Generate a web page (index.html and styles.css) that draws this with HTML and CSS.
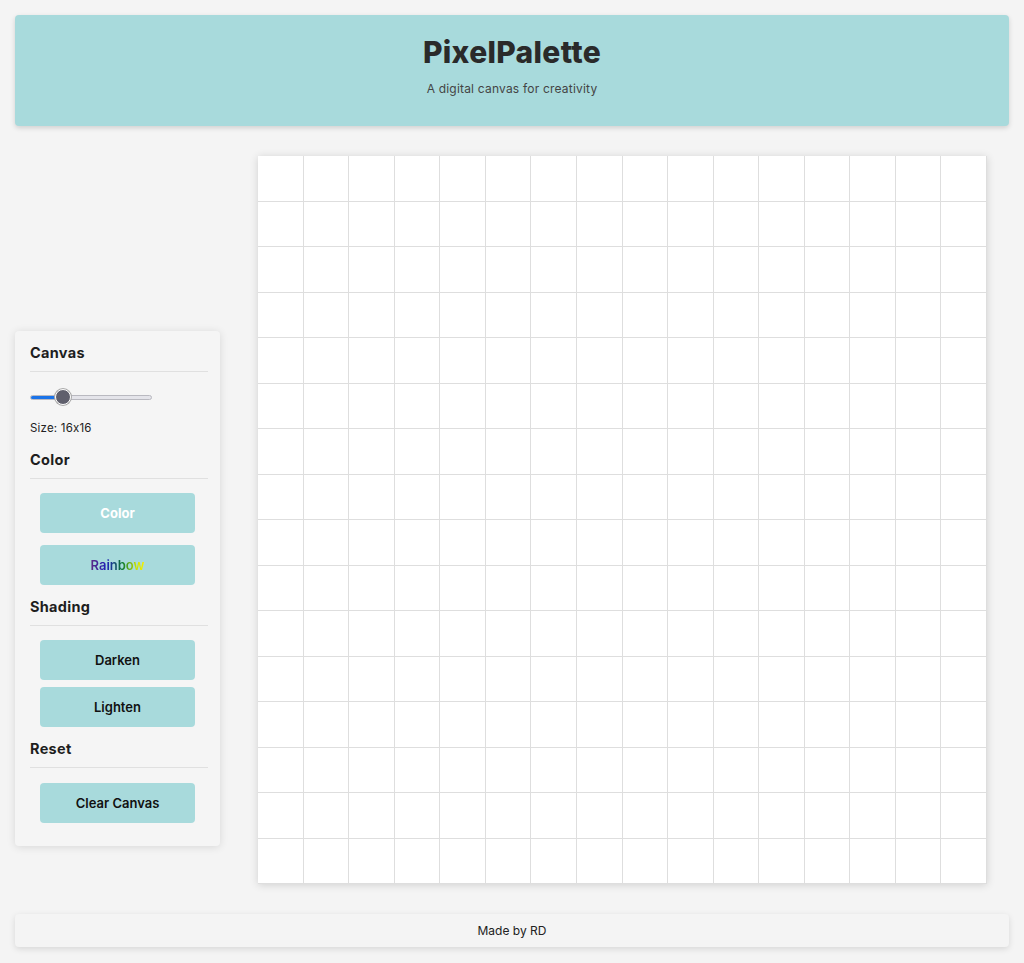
FILE: index.html
```html
<!DOCTYPE html>
<html lang="en">
<head>
<meta charset="UTF-8">
<title>PixelPalette</title>
<link rel="stylesheet" href="styles.css">
</head>
<body>
<div class="page">
  <header class="header">
    <h1 class="title">PixelPalette</h1>
    <p class="subtitle">A digital canvas for creativity</p>
  </header>
  <main class="main">
    <aside class="sidebar">
      <h2 class="section-title">Canvas</h2>
      <div class="rule"></div>
      <div class="slider">
        <div class="track"><div class="fill" style="width:27%"></div></div>
        <div class="thumb" style="left:27%"></div>
      </div>
      <p class="size">Size: 16x16</p>
      <h2 class="section-title">Color</h2>
      <div class="rule"></div>
      <button class="btn btn-color">Color</button>
      <button class="btn"><span class="rainbow">Rainbow</span></button>
      <h2 class="section-title">Shading</h2>
      <div class="rule"></div>
      <button class="btn">Darken</button>
      <button class="btn">Lighten</button>
      <h2 class="section-title">Reset</h2>
      <div class="rule"></div>
      <button class="btn btn-clear">Clear Canvas</button>
    </aside>
    <section class="canvas" id="canvas"></section>
  </main>
  <footer class="footer">Made by RD</footer>
</div>
<script>
  var c = document.getElementById('canvas');
  for (var i = 0; i < 256; i++) {
    var d = document.createElement('div');
    d.className = 'cell';
    c.appendChild(d);
  }
</script>
</body>
</html>
```

FILE: styles.css
```css
* { box-sizing: border-box; }
html, body { margin: 0; padding: 0; }
body {
  background: #f4f4f4;
  font-family: Inter, "Noto Sans", sans-serif;
  font-feature-settings: "calt" 0;
  color: #222;
}
.page {
  padding: 15px;
}
.header {
  background: #a8dadc;
  border-radius: 4px;
  height: 111px;
  box-shadow: 0 2px 5px rgba(0,0,0,0.15);
  text-align: center;
  padding-top: 19px;
}
.title {
  margin: 0;
  font-size: 30px;
  font-weight: 800;
  color: #2a2a2a;
  letter-spacing: 0.3px;
  line-height: 36px;
}
.subtitle {
  margin: 11px 0 0;
  font-size: 12px;
  color: #444;
  line-height: 16px;
  letter-spacing: 0.2px;
}
.main {
  display: flex;
  align-items: flex-start;
  margin-top: 30px;
}
.sidebar {
  width: 205px;
  margin-top: 175px;
  background: #f5f5f5;
  border-radius: 4px;
  box-shadow: 0 1px 8px rgba(0,0,0,0.12);
  padding: 13px 12px 23px 15px;
  display: flex;
  flex-direction: column;
  align-items: stretch;
}
.section-title {
  margin: 0;
  font-size: 14.5px;
  font-weight: 700;
  color: #1e1e1e;
  line-height: 18px;
  letter-spacing: 0.3px;
}
.rule {
  height: 1px;
  background: #e0e0e0;
  margin: 9px 0 14px;
}
.slider {
  position: relative;
  width: 122px;
  height: 16px;
  margin: 3px 0 0;
}
.track {
  position: absolute;
  left: 0; right: 0;
  top: 6px;
  height: 5px;
  border-radius: 3px;
  background: #e4e4ea;
  border: 1px solid #b9b9c0;
  overflow: hidden;
}
.fill {
  height: 100%;
  background: #1a73e8;
}
.thumb {
  position: absolute;
  top: 0;
  width: 16px;
  height: 16px;
  margin-left: -8px;
  border-radius: 50%;
  background: #5f5f6c;
  border: 1.5px solid #fff;
  box-shadow: 0 0 0 1px #aaa;
}
.size {
  margin: 16px 0 16px;
  font-size: 11.5px;
  line-height: 14px;
  color: #222;
  letter-spacing: 0.2px;
}
.btn {
  display: block;
  width: 155px;
  height: 40px;
  margin: 0 0 12px 10px;
  border: none;
  border-radius: 4px;
  background: #a8dadc;
  font-family: Inter, "Liberation Sans", sans-serif;
  font-size: 13px;
  font-weight: 600;
  color: #111;
  padding: 0;
}
.btn-color { color: #fff; font-weight: 700; }
.rainbow {
  background: linear-gradient(to right, #5b2a86, #1f1fb8 30%, #0a7a2a 60%, #c8e000 85%, #f5f000);
  -webkit-background-clip: text;
  background-clip: text;
  color: transparent;
}
.sidebar .btn:nth-of-type(2), .sidebar .btn:nth-of-type(4) { margin-bottom: 13px; }
.btn:nth-of-type(3) { margin-bottom: 7px; }
.btn-clear { margin-top: 1px; margin-bottom: 0; }
.canvas {
  width: 729px;
  height: 728px;
  margin-left: 38px;
  display: grid;
  grid-template-columns: repeat(16, 1fr);
  grid-template-rows: repeat(16, 1fr);
  background: #fff;
  box-shadow: 0 1px 8px rgba(0,0,0,0.15);
}
.cell {
  border-right: 1px solid #dedede;
  border-bottom: 1px solid #dedede;
  background: #fff;
}
.footer {
  margin-top: 30px;
  height: 33px;
  background: #f4f4f4;
  border-radius: 4px;
  box-shadow: 0 2px 6px rgba(0,0,0,0.12);
  text-align: center;
  line-height: 33px;
  font-size: 12px;
  color: #222;
}
```
